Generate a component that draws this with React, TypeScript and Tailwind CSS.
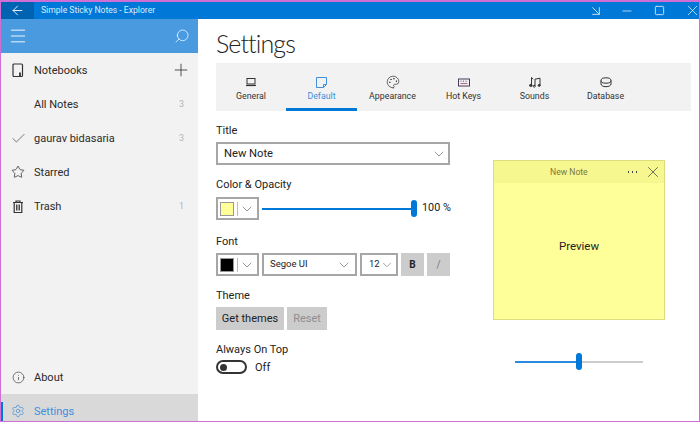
import { ArrowLeft, ArrowDownRight, Check, ChevronDown, Info, Menu, Minus, Palette, Plus, Search, Settings, Square, Star, X } from "lucide-react";
import type { ReactNode } from "react";

const font = "font-['Roboto','Noto_Sans',sans-serif]";

function NotebookIcon() {
  return (
    <svg width="14" height="15" viewBox="0 0 14 15" fill="none" stroke="#333" strokeWidth="1.2">
      <rect x="2" y="1" width="9.5" height="12.5" rx="1" />
      <path d="M9 9.5v4" strokeWidth="1.8" />
    </svg>
  );
}

function TrashIcon() {
  return (
    <svg width="14" height="15" viewBox="0 0 14 15" fill="none" stroke="#333" strokeWidth="1.2">
      <path d="M2 3.5h10M5 3.5V2h4v1.5M3.2 3.5V13.5h7.6V3.5" />
      <path d="M5.5 5.5v6M7 5.5v6M8.5 5.5v6" strokeWidth="0.9" />
    </svg>
  );
}

function LaptopIcon({ color }: { color: string }) {
  return (
    <svg width="12" height="10" viewBox="0 0 12 10" fill="none" stroke={color} strokeWidth="1">
      <rect x="2" y="1.5" width="8" height="5.5" />
      <path d="M1 8.5h10" strokeWidth="1.2" />
    </svg>
  );
}

function NoteIcon({ color }: { color: string }) {
  return (
    <svg width="13" height="13" viewBox="0 0 13 13" fill="none" stroke={color} strokeWidth="1">
      <path d="M1.5 1.5h10v7l-3 3h-7z" />
      <path d="M11.5 8.5h-3v3" />
    </svg>
  );
}

function KeysIcon({ color }: { color: string }) {
  return (
    <svg width="12" height="9" viewBox="0 0 12 9" fill="none" stroke={color} strokeWidth="1">
      <rect x="0.5" y="1" width="11" height="7" />
      <path d="M2.5 5.5h7" stroke="#b06a90" />
      <path d="M2.5 3.2h1M5 3.2h1M7.5 3.2h1" strokeWidth="0.9" />
    </svg>
  );
}

function DiskIcon({ color }: { color: string }) {
  return (
    <svg width="12" height="11" viewBox="0 0 12 11" fill="none" stroke={color} strokeWidth="1">
      <ellipse cx="6" cy="3.5" rx="5" ry="2.7" />
      <path d="M1 3.5v3.5c0 1.5 2.2 2.7 5 2.7s5-1.2 5-2.7V3.5" />
    </svg>
  );
}

function NotesIcon({ color }: { color: string }) {
  return (
    <svg width="12" height="12" viewBox="0 0 12 12" fill="none" stroke={color} strokeWidth="1">
      <path d="M2.5 9V1.5l1.8 1.6" />
      <ellipse cx="1.8" cy="9.4" rx="1.3" ry="1" fill={color} />
      <path d="M6 10V3.2l5-1v7" />
      <ellipse cx="5.2" cy="10.2" rx="1.1" ry="0.9" />
      <ellipse cx="10.2" cy="9.4" rx="1.1" ry="0.9" fill={color} />
    </svg>
  );
}

function NavRow({ icon, label, count, plus, active }: { icon?: ReactNode; label: string; count?: string; plus?: boolean; active?: boolean }) {
  return (
    <div className="flex h-[34px] items-center">
      <div className="flex w-[33px] shrink-0 justify-center pl-[1px]">{icon}</div>
      <span className={`mt-[2px] text-[11px] ${active ? "text-[#3f8fdc]" : "text-[#2b2b2b]"}`}>{label}</span>
      {count && <span className="ml-auto mr-[14px] mt-[2px] text-[9px] text-[#b5b5b5]">{count}</span>}
      {plus && <Plus className="ml-auto mr-[7px] text-[#333]" size={20} strokeWidth={1} />}
    </div>
  );
}

function Tab({ icon, label, active, first }: { icon: ReactNode; label: string; active?: boolean; first?: boolean }) {
  return (
    <div className={`flex h-full ${first ? "w-[70px]" : "w-[71px]"} flex-col items-center border-b-[3px] pt-[12px] ${active ? "border-[#0078d7]" : "border-transparent"}`}>
      <div className="flex h-[14px] items-center">{icon}</div>
      <span className={`mt-[1px] text-[8.8px] leading-[12px] ${active ? "text-[#3f8fdc]" : "text-[#333]"}`}>{label}</span>
    </div>
  );
}

function FieldLabel({ children, top }: { children: ReactNode; top: string }) {
  return <div className={`${top} h-[16px] text-[11px] leading-[18px] text-[#222]`}>{children}</div>;
}

function SwatchPicker({ swatch }: { swatch: string }) {
  return (
    <div className="flex h-[23px] w-[43px] shrink-0 items-center border-2 border-[#a6a6a6] pl-[2px]">
      <div className={`h-[14px] w-[14px] shrink-0 border border-[#999] ${swatch}`} />
      <div className="ml-[3px] h-[14px] w-px shrink-0 bg-[#bbb]" />
      <ChevronDown className="ml-px shrink-0 text-[#666]" size={16} strokeWidth={1} />
    </div>
  );
}

export default function App() {
  return (
    <div className={`${font} flex h-[422px] w-[700px] flex-col overflow-hidden border border-t-2 border-[#cf6fd6] bg-white`}>
      <div className="flex h-[17px] shrink-0 items-center bg-[#0078d7] text-white">
        <div className="flex h-full w-[33px] items-center justify-center bg-[#0063b1]">
          <ArrowLeft size={15} strokeWidth={1.4} />
        </div>
        <span className="ml-[7px] text-[8.6px] text-[#dcecfa]">Simple Sticky Notes - Explorer</span>
        <div className="ml-auto flex items-center">
          <ArrowDownRight className="mr-[16px] text-[#cfe6fa]" size={16} strokeWidth={1.4} />
          <Minus className="mr-[20px] text-[#cfe6fa]" size={14} strokeWidth={1.4} />
          <Square className="mr-[19px] text-[#cfe6fa]" size={11} strokeWidth={2} />
          <X className="-mr-[2px] text-[#cfe6fa]" size={17} strokeWidth={1.2} />
        </div>
      </div>

      <div className="flex min-h-0 flex-1">
        <aside className="mb-[-7px] flex w-[197px] shrink-0 flex-col bg-[#f2f2f2]">
          <div className="flex h-[34px] shrink-0 items-center justify-between bg-[#4a9ae0] pl-[7px] pr-[8px] text-white">
            <Menu size={20} strokeWidth={1.1} />
            <Search className="-scale-x-100" size={16} strokeWidth={1.1} />
          </div>
          <NavRow icon={<NotebookIcon />} label="Notebooks" plus />
          <NavRow label="All Notes" count="3" />
          <NavRow icon={<Check className="text-[#444]" size={17} strokeWidth={1} />} label="gaurav bidasaria" count="3" />
          <NavRow icon={<Star className="text-[#333]" size={14} strokeWidth={1.3} />} label="Starred" />
          <NavRow icon={<TrashIcon />} label="Trash" count="1" />
          <div className="mt-auto">
            <NavRow icon={<Info className="text-[#333]" size={13} strokeWidth={1.2} />} label="About" />
          </div>
          <div className="relative bg-[#d9d9d9]">
            <div className="absolute left-0 top-[8px] h-[26px] w-[2px] bg-[#0078d7]" />
            <NavRow icon={<Settings className="text-[#3f8fdc]" size={14} strokeWidth={1.2} />} label="Settings" active />
          </div>
        </aside>

        <main className="min-w-0 flex-1 pl-[18px] pr-[8px]">
          <h1 className="mt-[6px] h-[38px] font-['Lato','Roboto',sans-serif] text-[25px] leading-[36px] font-light tracking-[-0.9px] text-[#222]">Settings</h1>
          <div className="flex h-[48px] bg-[#f2f2f2]">
            <Tab first icon={<LaptopIcon color="#333" />} label="General" />
            <Tab icon={<NoteIcon color="#3f8fdc" />} label="Default" active />
            <Tab icon={<Palette className="text-[#333]" size={14} strokeWidth={1.2} />} label="Appearance" />
            <Tab icon={<KeysIcon color="#4a3a55" />} label="Hot Keys" />
            <Tab icon={<NotesIcon color="#333" />} label="Sounds" />
            <Tab icon={<DiskIcon color="#333" />} label="Database" />
          </div>

          <div className="flex">
            <div className="w-[234px] shrink-0">
              <FieldLabel top="mt-[11px]">Title</FieldLabel>
              <div className="mt-[4px] flex h-[23px] items-center justify-between border-2 border-[#a6a6a6] pl-[6px] pr-[1px] text-[11.2px] text-[#222]">
                <span className="mt-[2px]">New Note</span>
                <ChevronDown className="text-[#666]" size={16} strokeWidth={1} />
              </div>

              <FieldLabel top="mt-[11px]">Color &amp; Opacity</FieldLabel>
              <div className="mt-[5px] flex h-[23px] items-center">
                <SwatchPicker swatch="bg-[#ffff99]" />
                <div className="relative ml-[3px] h-[2px] w-[155px] shrink-0 bg-[#0078d7]">
                  <div className="absolute right-0 top-[-8px] h-[17px] w-[6px] rounded-full bg-[#0078d7]" />
                </div>
                <span className="ml-[5px] whitespace-nowrap text-[10.8px] text-[#222]">100 %</span>
              </div>

              <FieldLabel top="mt-[13px]">Font</FieldLabel>
              <div className="mt-[4px] flex h-[23px] items-center gap-[3px]">
                <SwatchPicker swatch="bg-black" />
                <div className="flex h-full w-[95px] items-center justify-between border-2 border-[#a6a6a6] pl-[6px] pr-[3px] text-[9.5px] text-[#222]">
                  Segoe UI
                  <ChevronDown className="text-[#666]" size={16} strokeWidth={1} />
                </div>
                <div className="flex h-full w-[38px] items-center justify-between border-2 border-[#a6a6a6] pl-[7px] pr-[2px] text-[9.5px] text-[#222]">
                  12
                  <ChevronDown className="text-[#666]" size={14} strokeWidth={1} />
                </div>
                <div className="flex h-full w-[23px] items-center justify-center bg-[#cccccc] text-[10px] font-bold text-[#222]">B</div>
                <div className="flex h-full w-[23px] items-center justify-center bg-[#cccccc] text-[10px] text-[#777]">/</div>
              </div>

              <FieldLabel top="mt-[11px]">Theme</FieldLabel>
              <div className="mt-[4px] flex h-[23px] gap-[3px] text-[11px]">
                <div className="flex w-[68px] items-center justify-center bg-[#cccccc] pt-[2px] text-[#222]">Get themes</div>
                <div className="flex w-[40px] items-center justify-center bg-[#cccccc] pt-[2px] text-[#8f8f8f]">Reset</div>
              </div>

              <FieldLabel top="mt-[11px]">Always On Top</FieldLabel>
              <div className="mt-[3px] flex h-[14px] items-center">
                <div className="flex h-[14px] w-[31px] items-center rounded-full border-2 border-[#333] pl-[2px]">
                  <div className="h-[7px] w-[7px] rounded-full bg-[#333]" />
                </div>
                <span className="ml-[8px] mt-[2px] text-[11px] text-[#222]">Off</span>
              </div>
            </div>

            <div className="ml-[43px] flex w-[172px] shrink-0 flex-col items-center">
              <div className="mt-[49px] flex h-[160px] w-full flex-col border border-[#dcdc80] bg-[#ffff99]">
                <div className="flex h-[22px] shrink-0 items-center bg-[#f7f78f] pl-[56px] pr-[2px] text-[8.6px] text-[#77773f]">
                  New Note
                  <div className="ml-auto flex gap-[2.5px]">
                    <div className="h-[1.5px] w-[1.5px] bg-[#444]" />
                    <div className="h-[1.5px] w-[1.5px] bg-[#444]" />
                    <div className="h-[1.5px] w-[1.5px] bg-[#444]" />
                  </div>
                  <X className="ml-[7px] text-[#444]" size={18} strokeWidth={1} />
                </div>
                <div className="flex flex-1 items-center justify-center pb-[8px] text-[11.5px] text-[#222]">Preview</div>
              </div>
              <div className="relative mt-[41px] flex h-[2px] w-[128px]">
                <div className="w-[64px] bg-[#2a8ae0]" />
                <div className="flex-1 bg-[#cccccc]" />
                <div className="absolute left-[61px] top-[-8px] h-[17px] w-[6px] rounded-full bg-[#0078d7]" />
              </div>
            </div>
          </div>
        </main>
      </div>
    </div>
  );
}
